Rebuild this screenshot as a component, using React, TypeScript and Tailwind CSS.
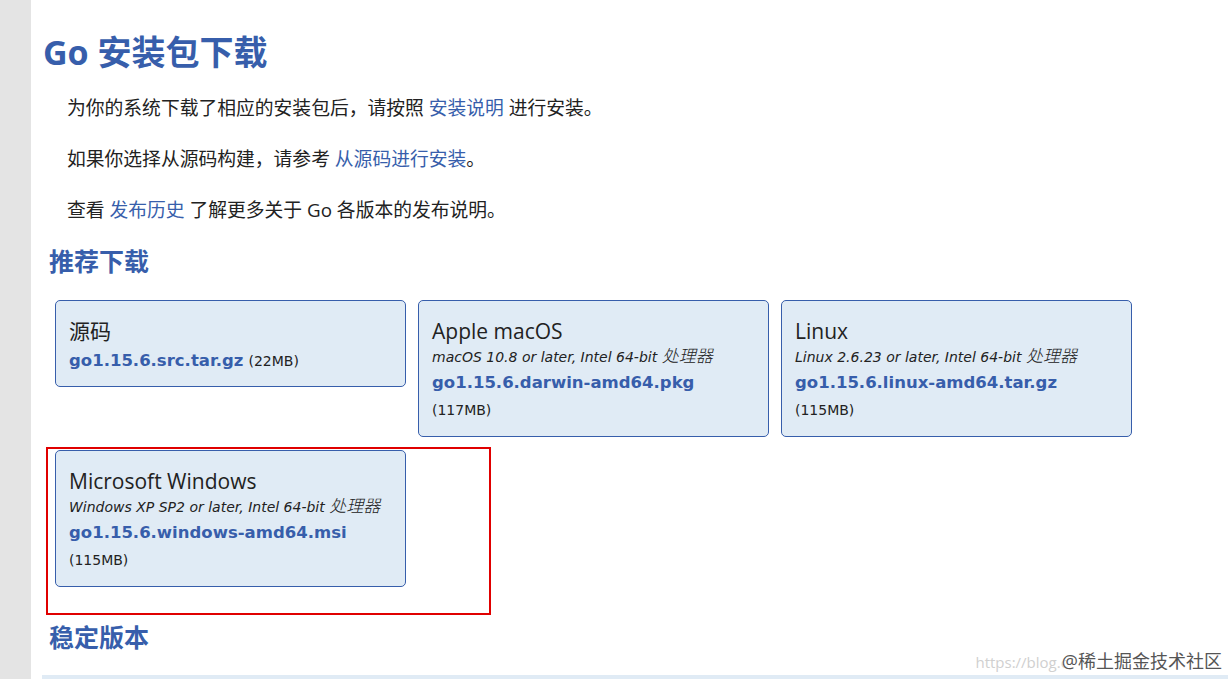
import React from "react";

const FONT = "font-['Open_Sans','Noto_Sans_CJK_SC',sans-serif]";
const VFONT = "font-['DejaVu_Sans','Noto_Sans_CJK_SC',sans-serif]";

type Card = {
  title: string;
  sub?: string;
  file: string;
  size: string;
  inline?: boolean;
};

function DownloadCard({ c }: { c: Card }) {
  return (
    <div className="w-[351px] rounded-[5px] border border-[#375eab] bg-[#e0ebf5] pl-[13px] pr-[10px] pt-[15px] pb-[10px]">
      <div className="text-[21px] leading-[30px] text-[#222]">{c.title}</div>
      {c.sub && (
        <div className={`${VFONT} h-[22px] text-[14px] italic leading-[22px] text-[#222]`}>
          {c.sub} <span className="text-[17px] leading-none font-light">处理器</span>
        </div>
      )}
      {c.inline ? (
        <div className={`${VFONT} leading-[29px]`}>
          <a className="text-[16.5px] font-bold text-[#375eab]">{c.file}</a>{" "}
          <span className="text-[14px] text-[#222]">{c.size}</span>
        </div>
      ) : (
        <>
          <div className={`${VFONT} text-[16.5px] font-bold leading-[30px] text-[#375eab]`}>
            {c.file}
          </div>
          <div className={`${VFONT} pb-[4px] text-[14px] leading-[24px] text-[#222]`}>{c.size}</div>
        </>
      )}
    </div>
  );
}

export default function App() {
  const cards: Card[] = [
    { title: "源码", file: "go1.15.6.src.tar.gz", size: "(22MB)", inline: true },
    {
      title: "Apple macOS",
      sub: "macOS 10.8 or later, Intel 64-bit",
      file: "go1.15.6.darwin-amd64.pkg",
      size: "(117MB)",
    },
    {
      title: "Linux",
      sub: "Linux 2.6.23 or later, Intel 64-bit",
      file: "go1.15.6.linux-amd64.tar.gz",
      size: "(115MB)",
    },
  ];
  const win: Card = {
    title: "Microsoft Windows",
    sub: "Windows XP SP2 or later, Intel 64-bit",
    file: "go1.15.6.windows-amd64.msi",
    size: "(115MB)",
  };

  return (
    <div className={`relative flex h-[679px] w-[1228px] overflow-hidden bg-white ${FONT}`}>
      <div className="w-[31px] shrink-0 bg-[#e4e4e4]" />
      <div className="flex flex-1 flex-col">
        <div className="h-[11px] bg-[#f8f8f8]" />
        <div className="flex flex-col pl-[12px]">
          <h1 className="mt-[31px] text-[34px] font-bold leading-[42px] text-[#375eab]">
            Go 安装包下载
          </h1>
          <div className="mt-[22px] flex flex-col gap-[24px] pl-[24px] text-[18.8px] leading-[27px] text-[#222]">
            <p>
              为你的系统下载了相应的安装包后，请按照{" "}
              <a className="text-[#375eab]">安装说明</a> 进行安装。
            </p>
            <p>
              如果你选择从源码构建，请参考 <a className="text-[#375eab]">从源码进行安装</a>。
            </p>
            <p>
              查看 <a className="text-[#375eab]">发布历史</a> 了解更多关于 Go 各版本的发布说明。
            </p>
          </div>
          <h2 className="ml-[6px] mt-[22px] text-[25px] font-bold leading-[30px] text-[#375eab]">
            推荐下载
          </h2>
          <div className="ml-[12px] mt-[24px] flex flex-col gap-[13px]">
            <div className="flex items-start gap-[12px]">
              {cards.map((c) => (
                <DownloadCard key={c.file} c={c} />
              ))}
            </div>
            <div className="relative w-[351px]">
              <DownloadCard c={win} />
              <div className="pointer-events-none absolute left-[-9px] top-[-3px] h-[168px] w-[445px] border-2 border-[#e00000]" />
            </div>
          </div>
          <h2 className="ml-[6px] mt-[35px] text-[25px] font-bold leading-[30px] text-[#375eab]">
            稳定版本
          </h2>
          <div className="ml-[-1px] mt-[23px] h-[20px] bg-[#e0ebf5]" />
        </div>
      </div>
      <div className="absolute bottom-[6px] right-[6px] flex items-baseline">
        <span className="text-[15px] text-[#d0d0d0]">https://blog.c</span>
        <span className="ml-[-6px] text-[18px] leading-[24px] text-[#555] [text-shadow:0_0_2px_#fff]">
          @稀土掘金技术社区
        </span>
      </div>
    </div>
  );
}
